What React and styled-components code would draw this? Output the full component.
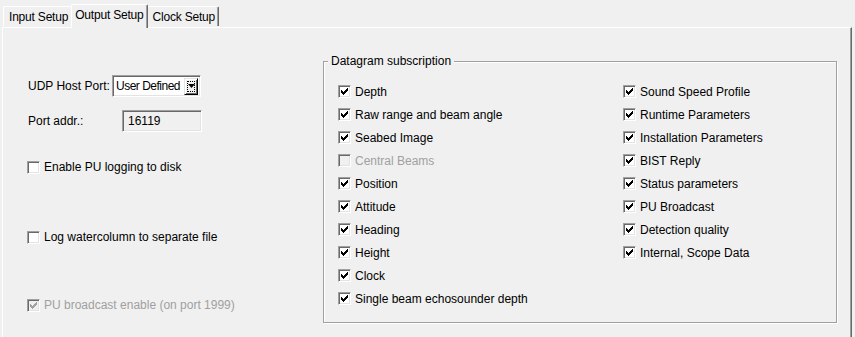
import React from 'react';
import styled, { createGlobalStyle } from 'styled-components';

const GlobalStyle = createGlobalStyle`
    html, body {
        margin: 0;
        padding: 0;
        background: #f0f0f0;
    }
    body {
        width: 855px;
        height: 337px;
        overflow: hidden;
        font-family: "Liberation Sans", Arial, sans-serif;
        font-size: 12px;
        color: #000;
    }
`;

const Window = styled.div`
    padding: 4px 0 0 2px;
    width: 855px;
    height: 337px;
    box-sizing: border-box;
`;

const TabStrip = styled.div`
    display: flex;
    align-items: flex-end;
    height: 23px;
    padding-left: 1px;
    position: relative;
    z-index: 2;
`;

const Tab = styled.div`
    box-sizing: border-box;
    height: ${p => (p.$active ? '24px' : '20px')};
    margin-bottom: ${p => (p.$active ? '-1px' : '1px')};
    padding: ${p => (p.$active ? '2px 3px 0 3px' : '2px 3px 0 5px')};
    line-height: 17px;
    background: #f0f0f0;
    border-top: 1px solid #fff;
    border-left: ${p => (p.$first || p.$active ? '1px solid #fff' : '0')};
    border-right: 1px solid #696969;
    box-shadow: ${p => (p.$first ? 'none' : 'inset -1px 0 0 #a0a0a0')};
    border-top-left-radius: 2px;
    border-top-right-radius: 2px;
    white-space: nowrap;
    letter-spacing: -0.2px;
    ${p => p.$first && 'border-right: 0;'}
`;

const Panel = styled.div`
    box-sizing: border-box;
    width: 850px;
    height: 320px;
    border-top: 1px solid #fff;
    border-left: 1px solid #fff;
    border-right: 1px solid #696969;
    box-shadow: inset -1px 0 0 #a0a0a0;
    display: flex;
    align-items: flex-start;
`;

const LeftColumn = styled.div`
    width: 320px;
    padding: 47px 0 0 25px;
    display: flex;
    flex-direction: column;
    box-sizing: border-box;
`;

const FieldRow = styled.div`
    display: flex;
    align-items: center;
    height: 22px;
    margin-top: ${p => p.$gap || 0}px;
`;

const Label = styled.span`
    width: ${p => p.$width}px;
    flex: none;
    white-space: nowrap;
`;

const Combo = styled.div`
    box-sizing: border-box;
    width: 89px;
    height: 22px;
    display: flex;
    align-items: center;
    background: #fff;
    border: 1px solid;
    border-color: #a0a0a0 #fff #fff #a0a0a0;
    box-shadow: inset 1px 1px 0 #696969, inset -1px -1px 0 #e3e3e3;
    padding: 2px 2px 2px 3px;
`;

const ComboText = styled.span`
    flex: 1;
    min-width: 0;
    overflow: hidden;
    white-space: nowrap;
    letter-spacing: -0.5px;
`;

const DropButton = styled.div`
    box-sizing: border-box;
    width: 14px;
    height: 17px;
    flex: none;
    background: #f0f0f0;
    border: 1px solid;
    border-color: #e3e3e3 #000 #000 #e3e3e3;
    box-shadow: inset 1px 1px 0 #fff, inset -1px -1px 0 #696969;
    padding: 2px;
    display: flex;
`;

const Focus = styled.div`
    flex: 1;
    outline: 1px dotted #000;
    outline-offset: -1px;
    display: flex;
    align-items: center;
    justify-content: center;
`;

const TextBox = styled.div`
    box-sizing: border-box;
    width: 80px;
    height: 22px;
    margin-left: 33px;
    background: #f0f0f0;
    border: 1px solid;
    border-color: #a0a0a0 #fff #fff #a0a0a0;
    box-shadow: inset 1px 1px 0 #696969, inset -1px -1px 0 #e3e3e3;
    padding: 3px 0 0 5px;
    line-height: 15px;
`;

const CheckRow = styled.label`
    display: flex;
    align-items: center;
    gap: 4px;
    height: 16px;
    margin-top: ${p => p.$gap || 0}px;
    margin-left: ${p => p.$shift || 0}px;
    color: ${p => (p.$disabled ? '#a0a0a0' : '#000')};
    white-space: nowrap;
`;

const Box = styled.span`
    box-sizing: border-box;
    width: 13px;
    height: 13px;
    flex: none;
    display: flex;
    align-items: center;
    justify-content: center;
    background: ${p => (p.$disabled ? '#f0f0f0' : '#fff')};
    border: 1px solid;
    border-color: #a0a0a0 #fff #fff #a0a0a0;
    box-shadow: inset 1px 1px 0 #696969, inset -1px -1px 0 #e3e3e3;
`;

const Group = styled.div`
    position: relative;
    box-sizing: border-box;
    width: 514px;
    height: 262px;
    margin: 33px 0 0 0;
    border: 1px solid #a0a0a0;
    box-shadow: inset 1px 1px 0 #fff, 1px 1px 0 #fff;
    padding: 18px 0 0 14px;
`;

const Legend = styled.span`
    position: absolute;
    top: -8px;
    left: 4px;
    padding: 0 3px;
    background: #f0f0f0;
    line-height: 15px;
`;

const Grid = styled.div`
    display: grid;
    grid-auto-flow: column;
    grid-template-rows: repeat(10, 23px);
    grid-template-columns: 285px 1fr;
    align-items: center;
`;

const Check = ({ color }) => (
    <svg width="7" height="7" viewBox="0 0 7 7" shapeRendering="crispEdges">
        <path
            fill={color}
            d="M6 0h1v3h-1v1h-1v1h-1v1h-1v1h-1v-1h-1v-1h-1v-3h1v1h1v1h1v-1h1v-1h1v-1h1z"
        />
    </svg>
);

const CheckBox = ({ checked, disabled, label, gap, shift }) => (
    <CheckRow $gap={gap} $shift={shift} $disabled={disabled}>
        <Box $disabled={disabled}>
            {checked && <Check color={disabled ? '#a0a0a0' : '#000'} />}
        </Box>
        {label}
    </CheckRow>
);

const datagrams = [
    ['Depth', true],
    ['Raw range and beam angle', true],
    ['Seabed Image', true],
    ['Central Beams', true, true],
    ['Position', true],
    ['Attitude', true],
    ['Heading', true],
    ['Height', true],
    ['Clock', true],
    ['Single beam echosounder depth', true],
    ['Sound Speed Profile', true],
    ['Runtime Parameters', true],
    ['Installation Parameters', true],
    ['BIST Reply', true],
    ['Status parameters', true],
    ['PU Broadcast', true],
    ['Detection quality', true],
    ['Internal, Scope Data', true],
];

export default function App() {
    return (
        <Window>
            <GlobalStyle />
            <TabStrip>
                <Tab $first>Input Setup</Tab>
                <Tab $active>Output Setup</Tab>
                <Tab>Clock Setup</Tab>
            </TabStrip>
            <Panel>
                <LeftColumn>
                    <FieldRow>
                        <Label $width={84}>UDP Host Port:</Label>
                        <Combo>
                            <ComboText>User Defined</ComboText>
                            <DropButton>
                                <Focus>
                                    <svg width="7" height="4" viewBox="0 0 7 4">
                                        <path d="M0 0h7l-3.5 4z" fill="#000" />
                                    </svg>
                                </Focus>
                            </DropButton>
                        </Combo>
                    </FieldRow>
                    <FieldRow $gap={13}>
                        <Label $width={61}>Port addr.:</Label>
                        <TextBox>16119</TextBox>
                    </FieldRow>
                    <CheckBox label="Enable PU logging to disk" gap={27} shift={-1} />
                    <CheckBox label="Log watercolumn to separate file" gap={54} shift={-1} />
                    <CheckBox label="PU broadcast enable (on port 1999)" checked disabled gap={52} shift={-1} />
                </LeftColumn>
                <Group>
                    <Legend>Datagram subscription</Legend>
                    <Grid>
                        {datagrams.map(([name, checked, disabled]) => (
                            <CheckBox key={name} label={name} checked={checked && !disabled} disabled={disabled} />
                        ))}
                    </Grid>
                </Group>
            </Panel>
        </Window>
    );
}
